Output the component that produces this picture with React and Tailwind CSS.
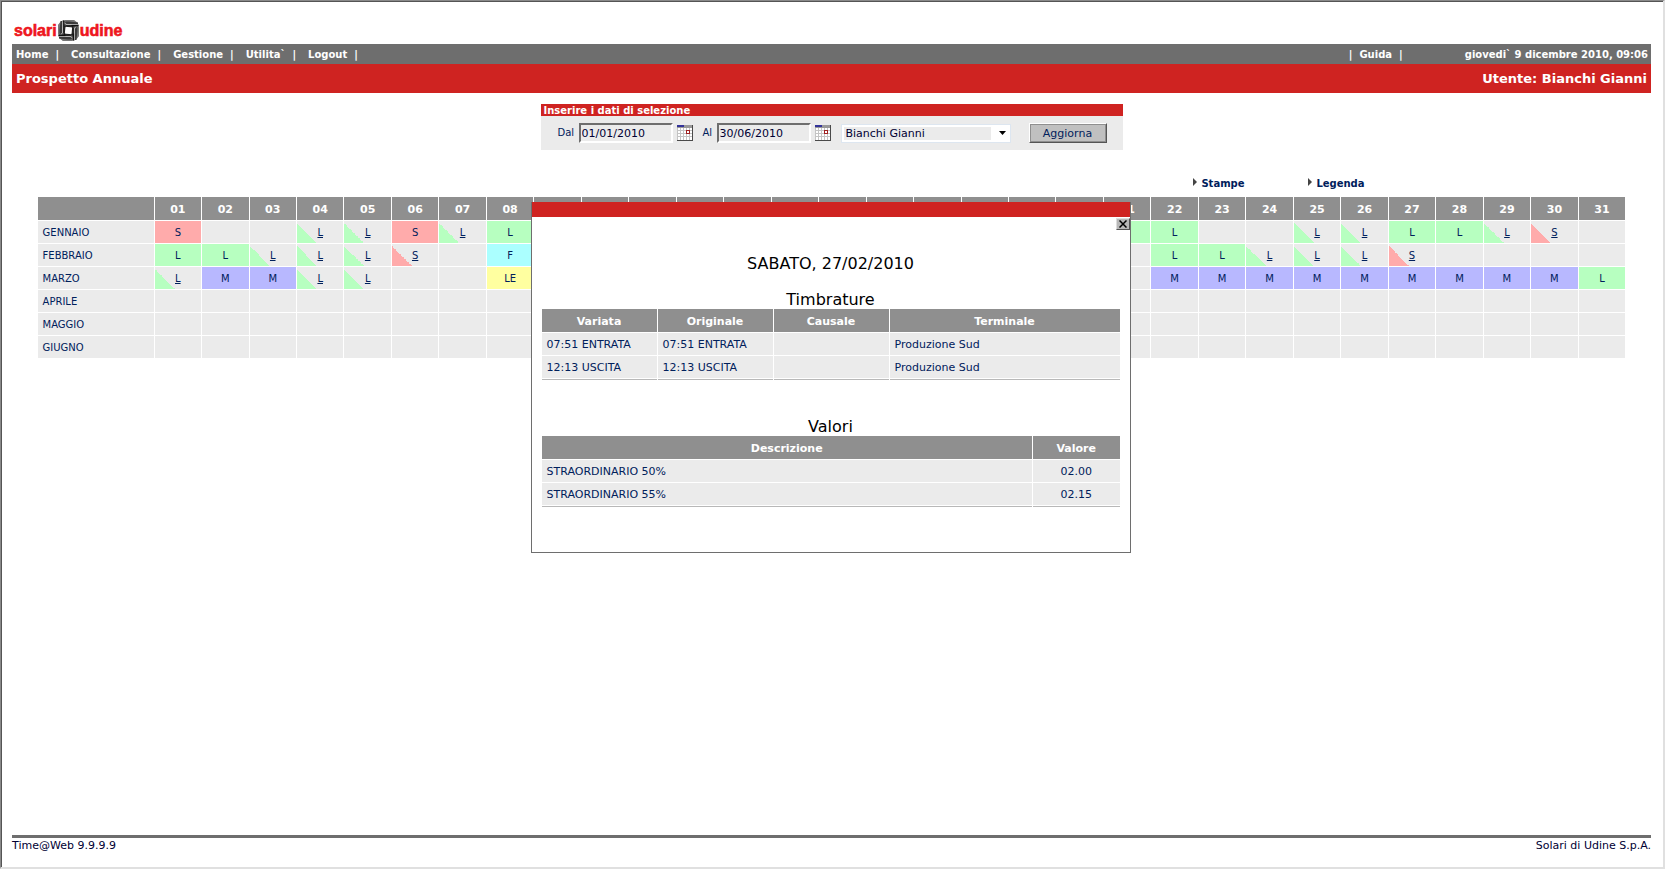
import { useState } from 'react';

const menu = ['Home', 'Consultazione', 'Gestione', 'Utilita`', 'Logout'];

const days = Array.from({ length: 31 }, (_, i) => String(i + 1).padStart(2, '0'));

// lower case = partial day (corner mark and link), upper case = full day
const months = [
  { name: 'GENNAIO', days: { 1: 'S', 4: 'l', 5: 'l', 6: 'S', 7: 'l', 8: 'L', 21: 'L', 22: 'L', 25: 'l', 26: 'l', 27: 'L', 28: 'L', 29: 'l', 30: 's' } },
  { name: 'FEBBRAIO', days: { 1: 'L', 2: 'L', 3: 'l', 4: 'l', 5: 'l', 6: 's', 8: 'F', 22: 'L', 23: 'L', 24: 'l', 25: 'l', 26: 'l', 27: 's' } },
  { name: 'MARZO', days: { 1: 'l', 2: 'M', 3: 'M', 4: 'l', 5: 'l', 8: 'LE', 22: 'M', 23: 'M', 24: 'M', 25: 'M', 26: 'M', 27: 'M', 28: 'M', 29: 'M', 30: 'M', 31: 'L' } },
  { name: 'APRILE', days: {} },
  { name: 'MAGGIO', days: {} },
  { name: 'GIUGNO', days: {} },
];

const cellStyles = {
  L: 'bg-[#b7ffc0]',
  S: 'bg-[#ffabab]',
  F: 'bg-[#abffff]',
  M: 'bg-[#b8b8ff]',
  LE: 'bg-[#ffffa0]',
  l: 'bg-[#ebebeb] bg-[linear-gradient(to_top_right,#b7ffc0_50%,transparent_50%)] bg-[length:20px_20px] bg-[position:left_bottom] bg-no-repeat',
  s: 'bg-[#ebebeb] bg-[linear-gradient(to_top_right,#ffabab_50%,transparent_50%)] bg-[length:20px_20px] bg-[position:left_bottom] bg-no-repeat',
};

const stamps = [
  ['07:51 ENTRATA', '07:51 ENTRATA', '', 'Produzione Sud'],
  ['12:13 USCITA', '12:13 USCITA', '', 'Produzione Sud'],
];

const values = [
  ['STRAORDINARIO 50%', '02.00'],
  ['STRAORDINARIO 55%', '02.15'],
];

function Logo() {
  return (
    <a href="#" aria-label="solari udine" className="flex items-center font-['Liberation_Sans',Arial,sans-serif] text-[16px] leading-[21px] font-bold text-[#ee1620] [-webkit-text-stroke:0.6px_#ee1620]">
      <span>solari</span>
      <svg viewBox="0 0 21 21" className="mx-px h-[21px] w-[21px]" aria-hidden="true">
        <path d="M5 0H16L21 5V16L16 21H5L0 16V5Z" fill="#a6a6a6" />
        {[0, 90, 180, 270].map((angle) => (
          <g key={angle} transform={`rotate(${angle} 10.5 10.5)`}>
            <path d="M6 0H16L20 3H9Z" fill="#777" />
            <path d="M6 1.5H11L20 2.6V4H8.5Z" fill="#3a3a3a" />
            <path d="M6 3.6L8 5H20V6.4H8Z" fill="#1c1c1c" />
            <path d="M6 6L7 7.6H14.5L17 6.4Z" fill="#111" />
            <path d="M5.5 0.5V7.5" stroke="#111" strokeWidth="1.2" />
            <path d="M8 4.6H19" stroke="#c4c4c4" strokeWidth="0.6" />
          </g>
        ))}
        <path d="M7.6 6.8L14.2 7.6L13.4 14.2L6.8 13.4Z" fill="#fff" />
      </svg>
      <span>udine</span>
    </a>
  );
}

function CalendarButton({ label }) {
  return (
    <button type="button" aria-label={label} className="ml-1 h-4 w-4">
      <svg viewBox="0 0 16 16" className="h-4 w-4" shapeRendering="crispEdges" aria-hidden="true">
        <rect width="16" height="16" fill="#4a4a4a" />
        <rect width="15" height="15" fill="#fff" />
        <rect width="15" height="3" fill="#999" />
        <rect width="7" height="2" fill="#333399" />
        <path d="M3.5 3V15M6.5 3V15M9.5 3V15M12.5 3V15M0 5.5H15M0 8.5H15M0 11.5H15M0.5 3V15" stroke="#c4c4c4" />
        <rect x="9.5" y="5.5" width="3" height="3" fill="#fff" stroke="#a02020" />
      </svg>
    </button>
  );
}

function SideLink({ children }) {
  return (
    <a href="#" className="flex w-[115px] gap-1 font-bold">
      <svg viewBox="0 0 4 8" className="h-2 w-1" aria-hidden="true">
        <path d="M0 0L4 4L0 8Z" fill="#444" />
      </svg>
      {children}
    </a>
  );
}

function DetailTable({ widths, head, rows, lastCentered }) {
  return (
    <table className="w-full table-fixed border-separate border-spacing-px text-left text-[11px] leading-3 text-[#00205b]">
      <colgroup>
        {widths.map((w, i) => <col key={i} className={w} />)}
      </colgroup>
      <thead>
        <tr>
          {head.map((h) => (
            <th key={h} className="h-[23px] bg-[#8f8f8f] p-0 pt-0.5 text-center text-white">{h}</th>
          ))}
        </tr>
      </thead>
      <tbody>
        {rows.map((row, r) => (
          <tr key={r}>
            {row.map((value, i) => (
              <td key={i} className={`h-[22px] bg-[#ebebeb] px-[5px] pt-0.5 pb-0 ${lastCentered && i === row.length - 1 ? 'text-center' : ''}`}>{value}</td>
            ))}
          </tr>
        ))}
        <tr aria-hidden="true">
          {head.map((h) => <td key={h} className="h-px bg-[#b8b8b8] p-0" />)}
        </tr>
      </tbody>
    </table>
  );
}

function DayDetail({ onClose }) {
  return (
    <div className="pointer-events-none absolute inset-x-0 top-[109px] flex justify-center pr-0.5">
      <section role="dialog" aria-label="Dettaglio giorno" className="pointer-events-auto w-[600px] border border-t-0 border-[#6e6e6e] bg-white">
        <div className="h-[15px] bg-[#cf2321]" />
        <div className="flex justify-end pt-px">
          <button
            type="button"
            aria-label="Chiudi"
            onClick={onClose}
            className="flex h-3 w-3.5 items-center justify-center border border-t-[#ddd] border-r-[#555] border-b-[#555] border-l-[#ddd] bg-[#b8b8b8]"
          >
            <svg viewBox="0 0 8 8" className="h-2 w-2" aria-hidden="true">
              <path d="M0.5 0.5L7.5 7.5M7.5 0.5L0.5 7.5" stroke="#000" strokeWidth="1.5" />
            </svg>
          </button>
        </div>
        <div className="px-[9px] pt-6 pb-11 text-center text-[16px] leading-5 text-black">
          <h1>SABATO, 27/02/2010</h1>
          <h2 className="mt-4 -mb-0.5">Timbrature</h2>
          <DetailTable
            widths={['w-[20%]', 'w-[20%]', 'w-[20%]', 'w-[40%]']}
            head={['Variata', 'Originale', 'Causale', 'Terminale']}
            rows={stamps}
          />
          <h2 className="mt-9 -mb-0.5">Valori</h2>
          <DetailTable widths={['w-[85%]', 'w-[15%]']} head={['Descrizione', 'Valore']} rows={values} lastCentered />
        </div>
      </section>
    </div>
  );
}

export default function App() {
  const [from, setFrom] = useState('01/01/2010');
  const [to, setTo] = useState('30/06/2010');
  const [open, setOpen] = useState(true);

  const dateInput = 'h-5 w-[94px] border-2 border-t-[#6e6e6e] border-r-white border-b-white border-l-[#6e6e6e] bg-[#ebebeb] px-px text-[11px] text-[#000033] outline-none';

  return (
    <div className="flex min-h-screen flex-col border-t border-r-2 border-b-2 border-l border-t-[#8a8a8a] border-r-[#e0e0e0] border-b-[#e0e0e0] border-l-[#8a8a8a] bg-white pr-3 pl-[11px] font-['DejaVu_Sans',Verdana,sans-serif] text-[10px] leading-3 text-[#00205b] shadow-[inset_1px_1px_#555]">
      <header>
        <div className="flex pt-[19px] pb-[3px] pl-0.5">
          <Logo />
        </div>
        <div className="flex h-5 items-center bg-[#6e6e6e] pt-0.5 pr-[3px] pl-1 font-bold text-white">
          <nav className="flex gap-3">
            {menu.map((item) => (
              <span key={item} className="flex gap-[7px]">
                <a href="#">{item}</a>
                <span>|</span>
              </span>
            ))}
          </nav>
          <div className="ml-auto flex gap-[62px]">
            <span className="flex gap-[7px]">
              <span>|</span>
              <a href="#">Guida</a>
              <span>|</span>
            </span>
            <span>giovedi` 9 dicembre 2010, 09:06</span>
          </div>
        </div>
        <div className="flex h-[29px] items-center justify-between bg-[#cf2321] px-1 pt-px text-[13px] leading-4 font-bold text-white">
          <span>Prospetto Annuale</span>
          <span>Utente: Bianchi Gianni</span>
        </div>
      </header>

      <main className="relative grow">
        <form onSubmit={(e) => e.preventDefault()} className="mx-auto mt-[11px] w-[582px] bg-[#ebebeb]">
          <div className="h-3 bg-[#cf2321] px-[3px] leading-[14px] font-bold text-white">Inserire i dati di selezione</div>
          <div className="flex h-[34px] items-center pl-[17px]">
            <label htmlFor="from" className="w-[21px]">Dal</label>
            <input id="from" value={from} onChange={(e) => setFrom(e.target.value)} className={dateInput} />
            <CalendarButton label="Scegli data iniziale" />
            <label htmlFor="to" className="ml-2.5 w-3.5">Al</label>
            <input id="to" value={to} onChange={(e) => setTo(e.target.value)} className={dateInput} />
            <CalendarButton label="Scegli data finale" />
            <div className="ml-2.5 flex h-[19px] w-[170px] items-center justify-between border border-[#dde6f0] bg-white pr-1 pl-0.5">
              <select aria-label="Dipendente" className="h-[13px] w-[147px] appearance-none bg-[#ebebeb] pl-0.5 text-[11px] leading-[13px] text-[#000033] outline-none">
                <option>Bianchi Gianni</option>
              </select>
              <svg viewBox="0 0 7 4" className="pointer-events-none h-1 w-[7px]" aria-hidden="true">
                <path d="M0 0H7L3.5 4Z" fill="#000" />
              </svg>
            </div>
            <button type="submit" className="ml-[18px] h-5 w-[78px] border-2 border-t-white border-r-[#555] border-b-[#555] border-l-white bg-[#c0c0c0] pt-px text-[11px] leading-3 outline outline-1 -outline-offset-2 outline-[#8f8f8f]">
              Aggiorna
            </button>
          </div>
        </form>

        <div className="mx-auto mt-7 flex h-[18px] w-[97%] justify-end pr-[203px]">
          <SideLink>Stampe</SideLink>
          <SideLink>Legenda</SideLink>
        </div>

        <table className="mx-auto w-[97%] table-fixed border-separate border-spacing-px text-center">
          <colgroup>
            <col className="w-[116px]" />
          </colgroup>
          <thead>
            <tr className="text-[11px] text-white">
              <th className="h-[23px] bg-[#8f8f8f] p-0" aria-label="Mese" />
              {days.map((d) => (
                <th key={d} className="h-[23px] bg-[#8f8f8f] p-0 pt-0.5">{d}</th>
              ))}
            </tr>
          </thead>
          <tbody>
            {months.map((month) => (
              <tr key={month.name}>
                <th className="h-[22px] bg-[#ebebeb] px-[5px] pt-0.5 pb-0 text-left font-normal">{month.name}</th>
                {days.map((d) => {
                  const code = month.days[Number(d)];
                  const partial = code === 'l' || code === 's';
                  return (
                    <td key={d} className={`h-[22px] p-0 pt-0.5 ${cellStyles[code] ?? 'bg-[#ebebeb]'}`}>
                      {partial ? (
                        <a href="#" onClick={() => setOpen(true)} className="underline">{code.toUpperCase()}</a>
                      ) : code}
                    </td>
                  );
                })}
              </tr>
            ))}
          </tbody>
        </table>

        {open && <DayDetail onClose={() => setOpen(false)} />}
      </main>

      <footer className="flex h-8 justify-between border-t-[3px] border-[#6e6e6e] pt-0.5 text-[11px] text-[#000033]">
        <span>Time@Web 9.9.9.9</span>
        <span>Solari di Udine S.p.A.</span>
      </footer>
    </div>
  );
}
